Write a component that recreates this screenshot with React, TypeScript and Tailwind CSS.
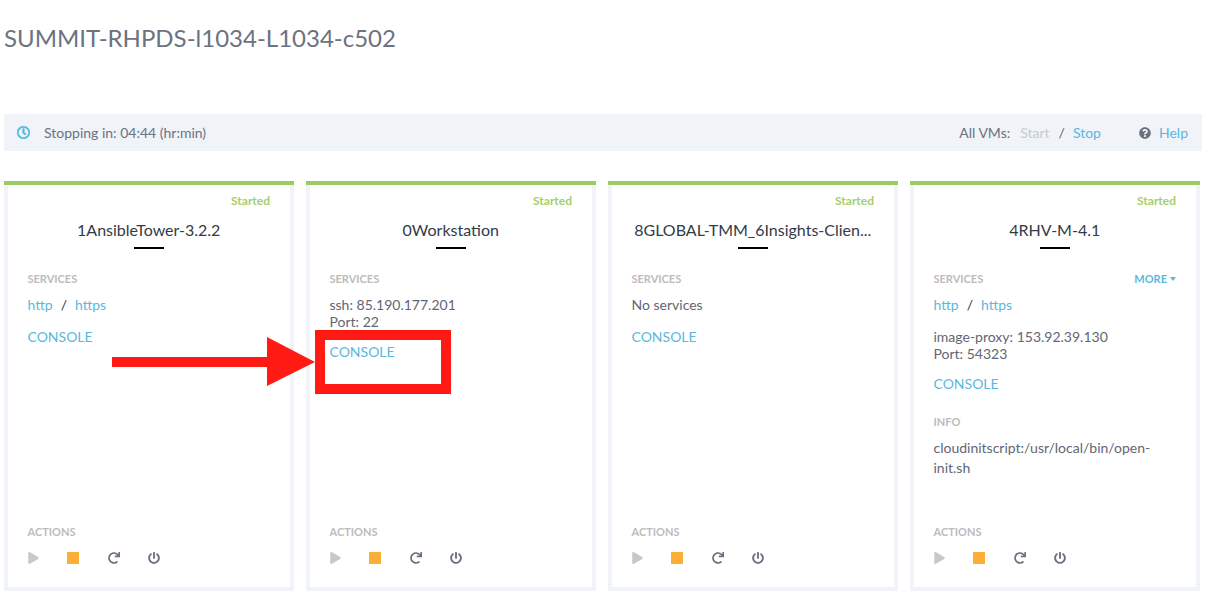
import { FaRegClock, FaQuestionCircle, FaPlay, FaRedo, FaPowerOff } from 'react-icons/fa';

function Label({ children }: { children: React.ReactNode }) {
  return <div className="text-[11px] leading-[14px] font-bold text-[#bcbcbc]">{children}</div>;
}

function Console() {
  return <a className="block text-[14px] leading-[20px] text-[#5bb8dd]">CONSOLE</a>;
}

function HttpLinks() {
  return (
    <div className="text-[14px] leading-[20px] text-[#2e3440]">
      <a className="text-[#5bb8dd]">http</a>
      <span className="mx-[8px]">/</span>
      <a className="text-[#5bb8dd]">https</a>
    </div>
  );
}

function Card({ title, more, children }: { title: string; more?: boolean; children: React.ReactNode }) {
  return (
    <div className="w-[290px] h-[410px] flex flex-col border-t-4 border-[#9ccb63]">
      <div className="flex-1 flex flex-col border-x-4 border-b-4 border-[#f0f3f8] pl-[19.5px] pr-5 pt-[8px]">
        <div className="text-right text-[12px] leading-[16px] font-bold text-[#a3cf6e]">Started</div>
        <div className="mt-[9px] text-center text-[16px] leading-[24px] text-[#333b47] whitespace-nowrap">{title}</div>
        <div className="mx-auto mt-[5px] w-[30px] h-[2px] bg-black" />
        <div className="mt-[23px] flex justify-between items-center">
          <Label>SERVICES</Label>
          {more && (
            <div className="flex items-center gap-[3px] text-[11px] leading-[14px] font-bold text-[#5bb8dd]">
              MORE
              <span className="w-0 h-0 border-x-[3.5px] border-x-transparent border-t-[4px] border-t-[#5bb8dd]" />
            </div>
          )}
        </div>
        <div className="flex-1 mt-[9px]">{children}</div>
        <Label>ACTIONS</Label>
        <div className="mt-[12px] mb-[22px] h-[14px] flex items-center">
          <FaPlay className="w-[11px] h-[12px] text-[#c8c8c8]" />
          <span className="ml-[28px] w-3 h-3 bg-[#fdae38]" />
          <FaRedo className="ml-[29px] w-3 h-3 text-[#6b7080]" />
          <FaPowerOff className="ml-[28px] w-3 h-3 text-[#6b7080]" />
        </div>
      </div>
    </div>
  );
}

export default function App() {
  return (
    <div className="relative w-[1211px] h-[591px] overflow-hidden bg-white font-['Lato',sans-serif] text-[#5f6673]">
      <div className="pl-1 pr-[9px]">
        <h1 className="pt-[23px] text-[24px] leading-[30px] text-[#6b7280]">SUMMIT-RHPDS-l1034-L1034-c502</h1>
        <div className="mt-[61px] h-[37px] bg-[#f0f3f8] flex items-center pl-[13px] pr-[14px] text-[14px]">
          <FaRegClock className="w-[13px] h-[13px] text-[#5bb8dd] stroke-[#5bb8dd] stroke-[30]" />
          <span className="ml-[14px] text-[#6b7280]">Stopping in: 04:44 (hr:min)</span>
          <span className="ml-auto text-[#6b7280]">All VMs:</span>
          <span className="ml-[10px] text-[#c9cbce]">Start</span>
          <span className="ml-[9px] mr-[8px]">/</span>
          <span className="text-[#5bb8dd]">Stop</span>
          <FaQuestionCircle className="ml-[38px] w-3 h-3 text-[#6b7080]" />
          <span className="ml-2 text-[#5bb8dd]">Help</span>
        </div>
        <div className="mt-[30px] flex gap-3">
          <Card title="1AnsibleTower-3.2.2">
            <HttpLinks />
            <div className="mt-3"><Console /></div>
          </Card>
          <Card title="0Workstation">
            <div className="text-[14px] leading-[17px] text-[#5f6673] pt-[1px]">
              ssh: 85.190.177.201
              <br />
              Port: 22
            </div>
            <div className="mt-[12px]"><Console /></div>
          </Card>
          <Card title="8GLOBAL-TMM_6Insights-Clien...">
            <div className="text-[14px] leading-[20px] text-[#5f6673]">No services</div>
            <div className="mt-3"><Console /></div>
          </Card>
          <Card title="4RHV-M-4.1" more>
            <HttpLinks />
            <div className="mt-[13px] text-[14px] leading-[17px] text-[#5f6673]">
              image-proxy: 153.92.39.130
              <br />
              Port: 54323
            </div>
            <div className="mt-[12px]"><Console /></div>
            <div className="mt-[21px]"><Label>INFO</Label></div>
            <div className="mt-[9px] text-[14px] leading-[20px] text-[#5f6673]">cloudinitscript:/usr/local/bin/open-init.sh</div>
          </Card>
        </div>
      </div>

      {/* annotation drawn over the page */}
      <svg className="absolute left-[110px] top-[335px]" width="210" height="55" viewBox="0 0 210 55">
        <rect x="2" y="22" width="160" height="10" fill="#ff1a14" />
        <polygon points="157,2 205,27 157,51" fill="#ff1a14" />
      </svg>
      <div className="absolute left-[315px] top-[330px] w-[136px] h-[64px] border-[10px] border-[#ff1a14]" />
    </div>
  );
}
